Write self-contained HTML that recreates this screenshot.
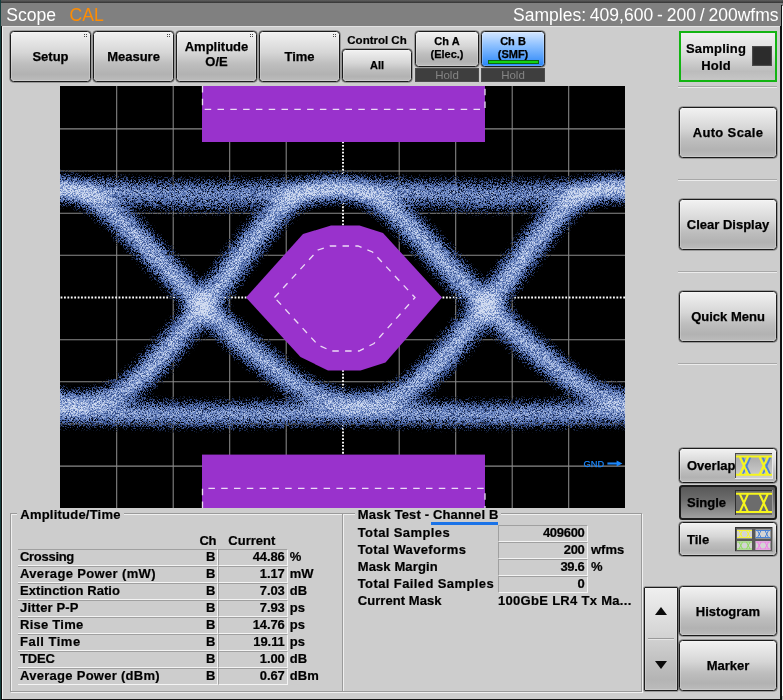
<!DOCTYPE html>
<html lang="en"><head><meta charset="utf-8"><title>Scope</title>
<style>
html,body{margin:0;padding:0}
body{will-change:transform;width:783px;height:700px;overflow:hidden;position:relative;background:#cdcdcd;font-family:"Liberation Sans",sans-serif;color:#000}
.abs{position:absolute}
.btn{position:absolute;box-sizing:border-box;border:1px solid #1c1c1c;border-radius:3.5px;background:linear-gradient(#f2f2f2 0%,#d6d6d6 42%,#bebebe 65%,#b2b2b2 86%,#bcbcbc 100%);font-weight:bold;font-size:13px;display:flex;align-items:center;justify-content:center;text-align:center;line-height:15px;color:#000;-webkit-text-stroke:0.25px #000;box-shadow:inset 0 0 0 1px rgba(255,255,255,.22),0 0 0 0.5px rgba(0,0,0,.5)}
.btn span{display:block}
.dots{position:absolute;right:3px;top:2px;width:3px;height:3px;background:
 linear-gradient(#444,#444) 0 0/1px 1px no-repeat,linear-gradient(#444,#444) 2px 0/1px 1px no-repeat,
 linear-gradient(#444,#444) 0 2px/1px 1px no-repeat,linear-gradient(#444,#444) 2px 2px/1px 1px no-repeat}
.sm{font-size:11px;line-height:13px}
.hold{position:absolute;box-sizing:border-box;background:#3e3e3e;border:1px solid #4c4c4c;color:#848484;font-size:11.5px;text-align:center;line-height:12px;height:14px;width:64px}
.sep{position:absolute;left:678px;width:99px;height:0;border-top:1px solid #a8a8a8;border-bottom:1px solid #ececec}
.gb{position:absolute;box-sizing:border-box;border:1px solid #9a9a9a;box-shadow:1px 1px 0 #f0f0f0, inset 1px 1px 0 #f0f0f0}
.gbt{position:absolute;background:#cdcdcd;-webkit-text-stroke:0.2px #000;font-weight:bold;font-size:13px;line-height:15px;padding:0 3px;white-space:nowrap}
.t{position:absolute;font-weight:bold;font-size:13px;line-height:16px;white-space:nowrap;-webkit-text-stroke:0.2px #000}
.cell{position:absolute;box-sizing:border-box;height:17px;border-top:1px solid #a0a0a0;border-left:1px solid #a0a0a0;border-bottom:1px solid #f4f4f4;border-right:1px solid #f4f4f4}
</style></head><body>

<div class="abs" style="left:0;top:0;width:783px;height:3px;background:linear-gradient(#606060,#343434)"></div>
<div class="abs" style="left:0;top:3px;width:783px;height:23px;background:#808080"></div>
<div class="abs" style="left:0;top:0;width:1px;height:700px;background:#17403f"></div>
<div class="abs" style="left:1px;top:26px;width:1px;height:674px;background:#111"></div>
<div class="abs" style="left:2px;top:26px;width:1px;height:673px;background:#f2f2f2"></div>
<div class="abs" style="left:2px;top:26px;width:778px;height:1px;background:#e2e2e2"></div>
<div class="abs" style="left:1px;top:699px;width:781px;height:1px;background:#111"></div>
<div class="abs" style="left:780px;top:26px;width:2px;height:674px;background:#111"></div>
<div class="abs" style="left:781px;top:5px;width:1px;height:22px;background:#111"></div>
<div class="abs" style="left:782px;top:6px;width:1px;height:690px;background:#fff"></div>
<div class="abs" style="left:6.2px;top:4.8px;font-size:17.6px;line-height:20px;color:#fff;white-space:nowrap">Scope</div>
<div class="abs" style="left:69.5px;top:4.8px;font-size:17.6px;line-height:20px;color:#ff8c00;white-space:nowrap">CAL</div>
<div class="abs" style="right:4.5px;top:4.5px;font-size:17.5px;word-spacing:-1px;line-height:20px;color:#fff;white-space:nowrap">Samples: 409,600 - 200 / 200wfms</div>
<div class="btn " style="left:10px;top:31px;width:81px;height:51px;"><i class="dots"></i><span>Setup</span></div>
<div class="btn " style="left:93px;top:31px;width:81px;height:51px;"><i class="dots"></i><span>Measure</span></div>
<div class="btn " style="left:176px;top:31px;width:81px;height:51px;line-height:14.5px;padding-bottom:4px"><i class="dots"></i><span>Amplitude<br>O/E</span></div>
<div class="btn " style="left:259px;top:31px;width:81px;height:51px;"><i class="dots"></i><span>Time</span></div>
<div class="t" style="left:342px;top:32px;width:70px;text-align:center;font-size:11.5px">Control Ch</div>
<div class="btn sm" style="left:342px;top:49px;width:70px;height:33px;"><span>All</span></div>
<div class="btn sm" style="left:415px;top:31px;width:64px;height:36px;padding-bottom:3px"><span>Ch A<br>(Elec.)</span></div>
<div class="btn sm chb" style="left:481px;top:31px;width:64px;height:36px;background:linear-gradient(#d4e6ff 0%,#8cc0ff 40%,#2a86f8 100%);padding-bottom:3px"><span>Ch B<br>(SMF)</span></div>
<div class="abs" style="left:488px;top:60px;width:51px;height:4px;box-sizing:border-box;background:#14d414;border:1px solid #0c6a0c"></div>
<div class="hold" style="left:415px;top:68px">Hold</div>
<div class="hold" style="left:481px;top:68px">Hold</div>
<div class="abs" style="left:679px;top:31px;width:98px;height:51px;box-sizing:border-box;border:2px solid #12b412;background:linear-gradient(#efefef 0%,#dcdcdc 45%,#bcbcbc 82%,#c6c6c6 100%)"></div>
<div class="t" style="left:681px;top:40.3px;width:70px;text-align:center;line-height:17px;letter-spacing:0.2px">Sampling<br>Hold</div>
<div class="abs" style="left:752px;top:46px;width:20px;height:20px;box-sizing:border-box;background:#2c2c2c;border:1px solid #4a4a4a;box-shadow:inset 0 0 2px #3c3c3c"></div>
<div class="sep" style="top:86px"></div>
<div class="sep" style="top:179px"></div>
<div class="sep" style="top:271px"></div>
<div class="sep" style="top:363px"></div>
<div class="btn " style="left:679px;top:107px;width:98px;height:51px;letter-spacing:0.35px"><span>Auto Scale</span></div>
<div class="btn " style="left:679px;top:199px;width:98px;height:51px;"><span>Clear Display</span></div>
<div class="btn " style="left:679px;top:291px;width:98px;height:51px;"><span>Quick Menu</span></div>
<div class="btn " style="left:679px;top:448px;width:98px;height:35px;justify-content:flex-start;padding-left:7px"><span>Overlap</span></div>
<div class="btn " style="left:679px;top:485px;width:98px;height:35px;justify-content:flex-start;padding-left:6px;background:linear-gradient(#585858,#6c6c6c 40%,#a0a0a0);border:2px solid #1c1c1c;box-shadow:none"><span>Single</span></div>
<div class="btn " style="left:679px;top:522px;width:98px;height:34px;justify-content:flex-start;padding-left:7px"><span>Tile</span></div>
<div class="btn " style="left:679px;top:586px;width:98px;height:50px;"><span>Histogram</span></div>
<div class="btn " style="left:679px;top:640px;width:98px;height:51px;"><span>Marker</span></div>
<div class="btn " style="left:644px;top:587px;width:34px;height:104px;border-radius:1px;background:linear-gradient(#efefef 0%,#d8d8d8 40%,#b4b4b4 90%,#bcbcbc 100%)"><span></span></div>
<div class="abs" style="left:648px;top:638px;width:26px;height:0;border-top:1px solid #9a9a9a;border-bottom:1.5px solid #e6e6e6"></div>
<div class="abs" style="left:654.7px;top:607px;width:0;height:0;border-left:6.3px solid transparent;border-right:6.3px solid transparent;border-bottom:8.2px solid #0a0a0a"></div>
<div class="abs" style="left:654.7px;top:661px;width:0;height:0;border-left:6.3px solid transparent;border-right:6.3px solid transparent;border-top:8.2px solid #0a0a0a"></div>
<svg class="abs" style="left:735px;top:453px" width="38" height="26" viewBox="0 0 38 26">
<defs><linearGradient id="ig1" x1="0" y1="0" x2="0" y2="1"><stop offset="0" stop-color="#a6a6a6"/><stop offset="1" stop-color="#cfcfcf"/></linearGradient></defs>
<rect x="0" y="0" width="38" height="26" fill="#e8e8e8"/><rect x="0" y="0" width="37" height="25" fill="#4a4a4a"/><rect x="1" y="1" width="36" height="24" fill="url(#ig1)"/>
<g fill="none" stroke="#4c84d6" stroke-width="1.8"><path d="M7.5,4 L15.5,22 M7.5,22 L15.5,4 M27.5,4 L35.5,22 M27.5,22 L35.5,4"/></g>
<g fill="none" stroke="#f6f61c" stroke-width="2"><path d="M1,3.6 H37 M1,21.8 H37"/><path stroke-width="2" d="M4.8,4 L13,21.5 M4.8,21.5 L13,4 M24.6,4 L32.8,21.5 M24.6,21.5 L32.8,4"/></g></svg>
<svg class="abs" style="left:735px;top:490px" width="38" height="26" viewBox="0 0 38 26">
<rect x="0" y="0" width="38" height="26" fill="#9a9a9a"/><rect x="0" y="0" width="37" height="25" fill="#2e2e2e"/><rect x="1" y="1" width="36" height="24" fill="#6c6c6c"/>
<g fill="none" stroke="#f6f61c" stroke-width="2"><path d="M1,3.8 H37 M1,22 H37"/><path stroke-width="2" d="M4.8,4 L13,22 M4.8,22 L13,4 M24.6,4 L32.8,22 M24.6,22 L32.8,4"/></g></svg>
<svg class="abs" style="left:735px;top:527px" width="38" height="25" viewBox="0 0 38 25">
<rect x="0" y="0" width="38" height="25" fill="#9a9a9a"/><rect x="0" y="0" width="37" height="24" fill="#333"/><rect x="1" y="1" width="36" height="23" fill="#585858"/>
<rect x="2" y="2.5" width="15" height="9" fill="#d4d4d4"/><g fill="none" stroke="#f2f23a" stroke-width="1"><path d="M2,3.5 h15 M2,10.5 h15"/><path d="M4,3.5 l3.5,7 M4,10.5 l3.5,-7 M11.5,3.5 l3.5,7 M11.5,10.5 l3.5,-7"/></g><rect x="20.5" y="2.5" width="15" height="9" fill="#d4d4d4"/><g fill="none" stroke="#4c84d6" stroke-width="1"><path d="M20.5,3.5 h15 M20.5,10.5 h15"/><path d="M22.5,3.5 l3.5,7 M22.5,10.5 l3.5,-7 M30.0,3.5 l3.5,7 M30.0,10.5 l3.5,-7"/></g><rect x="2" y="14" width="15" height="9" fill="#d4d4d4"/><g fill="none" stroke="#8edc5a" stroke-width="1"><path d="M2,15 h15 M2,22 h15"/><path d="M4,15 l3.5,7 M4,22 l3.5,-7 M11.5,15 l3.5,7 M11.5,22 l3.5,-7"/></g><rect x="20.5" y="14" width="15" height="9" fill="#d4d4d4"/><g fill="none" stroke="#f07ae8" stroke-width="1"><path d="M20.5,15 h15 M20.5,22 h15"/><path d="M22.5,15 l3.5,7 M22.5,22 l3.5,-7 M30.0,15 l3.5,7 M30.0,22 l3.5,-7"/></g></svg>
<svg class="abs" style="left:60px;top:86px" width="565" height="422" viewBox="60 86 565 422">
<defs>
<filter id="eye" filterUnits="userSpaceOnUse" x="60" y="86" width="565" height="422" color-interpolation-filters="sRGB">
<feGaussianBlur in="SourceGraphic" stdDeviation="6.2" result="d"/>
<feTurbulence type="fractalNoise" baseFrequency="1.618 1.4142" numOctaves="1" seed="3" result="t"/>
<feColorMatrix in="t" type="matrix" values="3.3 0 0 0 -1.15  3.3 0 0 0 -1.15  3.3 0 0 0 -1.15  0 0 0 0 1" result="n"/>
<feComponentTransfer in="d" result="sd"><feFuncR type="gamma" exponent="0.4" amplitude="1" offset="0"/><feFuncG type="gamma" exponent="0.4" amplitude="1" offset="0"/><feFuncB type="gamma" exponent="0.4" amplitude="1" offset="0"/></feComponentTransfer>
<feComposite in="sd" in2="n" operator="arithmetic" k1="1" k2="-0.5" k3="0" k4="0.5" result="T"/>
<feComposite in="d" in2="T" operator="arithmetic" k1="0" k2="1.78" k3="1.04" k4="-0.62" result="s"/>
<feColorMatrix in="s" type="matrix" values="1 0 0 0 0  1 0 0 0 0  1 0 0 0 0  0 0 0 0 1" result="s0"/>
<feComponentTransfer in="s0" result="c">
<feFuncR type="table" tableValues="0 0.19 0.33 0.46 0.59 0.715 0.825"/>
<feFuncG type="table" tableValues="0 0.28 0.44 0.56 0.67 0.775 0.865"/>
<feFuncB type="table" tableValues="0 0.50 0.69 0.78 0.845 0.90 0.945"/>
</feComponentTransfer>
<feColorMatrix in="c" type="matrix" values="1 0 0 0 0  0 1 0 0 0  0 0 1 0 0  0 0 5 0 0" result="ca"/>
<feGaussianBlur in="ca" stdDeviation="0.75"/>
</filter>
</defs>
<rect x="60" y="86" width="565" height="422" fill="#000"/>
<g stroke="#8a8a8a" stroke-width="1.05">
<line x1="116.70" y1="86" x2="116.70" y2="508"/>
<line x1="173.20" y1="86" x2="173.20" y2="508"/>
<line x1="229.70" y1="86" x2="229.70" y2="508"/>
<line x1="286.20" y1="86" x2="286.20" y2="508"/>
<line x1="399.20" y1="86" x2="399.20" y2="508"/>
<line x1="455.70" y1="86" x2="455.70" y2="508"/>
<line x1="512.20" y1="86" x2="512.20" y2="508"/>
<line x1="568.70" y1="86" x2="568.70" y2="508"/>
<line x1="60" y1="128.86" x2="625" y2="128.86"/>
<line x1="60" y1="171.02" x2="625" y2="171.02"/>
<line x1="60" y1="213.18" x2="625" y2="213.18"/>
<line x1="60" y1="255.34" x2="625" y2="255.34"/>
<line x1="60" y1="339.66" x2="625" y2="339.66"/>
<line x1="60" y1="381.82" x2="625" y2="381.82"/>
<line x1="60" y1="423.98" x2="625" y2="423.98"/>
<line x1="60" y1="466.14" x2="625" y2="466.14"/>
</g>
<g stroke="#fff" stroke-width="1.9" stroke-dasharray="1.8 1.61">
<line x1="343" y1="87" x2="343" y2="508"/>
<line x1="60.6" y1="297.5" x2="625" y2="297.5"/>
</g>
<g filter="url(#eye)">
<rect x="0" y="0" width="783" height="700" fill="#000"/>
<g fill="none" stroke="#fff" stroke-width="10" stroke-opacity="0.32" stroke-linecap="butt">
<path stroke-width="11" stroke-opacity="0.24" d="M30.0,189.0 L42.0,189.0 L54.0,189.0 L66.0,189.0 L78.0,189.0 L90.0,189.0 L102.0,189.0 L114.0,189.0 L126.0,189.0 L138.0,189.0 L150.0,189.0 L162.0,189.0 L174.0,189.0 L186.0,189.0 L198.0,189.0 L210.0,189.0 L222.0,189.0 L234.0,189.0 L246.0,189.0 L258.0,189.0 L270.0,189.0 L282.0,189.0 L294.0,189.0 L306.0,189.0 L318.0,189.0 L330.0,189.0 L342.0,189.0 L354.0,189.0 L366.0,189.0 L378.0,189.0 L390.0,189.0 L402.0,189.0 L414.0,189.0 L426.0,189.0 L438.0,189.0 L450.0,189.0 L462.0,189.0 L474.0,189.0 L486.0,189.0 L498.0,189.0 L510.0,189.0 L522.0,189.0 L534.0,189.0 L546.0,189.0 L558.0,189.0 L570.0,189.0 L582.0,189.0 L594.0,189.0 L606.0,189.0 L618.0,189.0 L630.0,189.0 L642.0,189.0 L654.0,189.0"/>
<path stroke-width="17" stroke-opacity="0.25" d="M30.0,191.8 L36.0,191.4 L42.0,191.0 L48.0,190.8 L54.0,190.6 L60.0,190.5 L66.0,190.5 L72.0,190.6 L78.0,190.7 L84.0,190.9 L90.0,191.2 L96.0,191.6 L102.0,192.0 L108.0,192.4 L114.0,193.0 L120.0,193.5 L126.0,194.1 L132.0,194.7 L138.0,195.3 L144.0,195.9 L150.0,196.4 L156.0,197.0 L162.0,197.5 L168.0,198.0 L174.0,198.4 L180.0,198.8 L186.0,199.1 L192.0,199.3 L198.0,199.4 L204.0,199.5 L210.0,199.5 L216.0,199.4 L222.0,199.2 L228.0,199.0 L234.0,198.7 L240.0,198.3 L246.0,197.8 L252.0,197.4 L258.0,196.8 L264.0,196.3 L270.0,195.7 L276.0,195.1 L282.0,194.5 L288.0,193.9 L294.0,193.3 L300.0,192.8 L306.0,192.3 L312.0,191.8 L318.0,191.4 L324.0,191.1 L330.0,190.8 L336.0,190.6 L342.0,190.5 L348.0,190.5 L354.0,190.5 L360.0,190.7 L366.0,190.9 L372.0,191.1 L378.0,191.5 L384.0,191.9 L390.0,192.4 L396.0,192.9 L402.0,193.4 L408.0,194.0 L414.0,194.6 L420.0,195.2 L426.0,195.8 L432.0,196.4 L438.0,196.9 L444.0,197.4 L450.0,197.9 L456.0,198.3 L462.0,198.7 L468.0,199.0 L474.0,199.3 L480.0,199.4 L486.0,199.5 L492.0,199.5 L498.0,199.4 L504.0,199.3 L510.0,199.0 L516.0,198.7 L522.0,198.3 L528.0,197.9 L534.0,197.4 L540.0,196.9 L546.0,196.4 L552.0,195.8 L558.0,195.2 L564.0,194.6 L570.0,194.0 L576.0,193.4 L582.0,192.9 L588.0,192.4 L594.0,191.9 L600.0,191.5 L606.0,191.1 L612.0,190.9 L618.0,190.7 L624.0,190.5 L630.0,190.5 L636.0,190.5 L642.0,190.6 L648.0,190.8 L654.0,191.1"/>
<path stroke-width="16" stroke-opacity="0.4" d="M30.0,412.8 L36.0,412.7 L42.0,412.6 L48.0,412.6 L54.0,412.5 L60.0,412.5 L66.0,412.5 L72.0,412.5 L78.0,412.5 L84.0,412.6 L90.0,412.7 L96.0,412.7 L102.0,412.8 L108.0,412.9 L114.0,413.0 L120.0,413.2 L126.0,413.3 L132.0,413.4 L138.0,413.6 L144.0,413.7 L150.0,413.8 L156.0,413.9 L162.0,414.1 L168.0,414.2 L174.0,414.3 L180.0,414.3 L186.0,414.4 L192.0,414.5 L198.0,414.5 L204.0,414.5 L210.0,414.5 L216.0,414.5 L222.0,414.4 L228.0,414.4 L234.0,414.3 L240.0,414.2 L246.0,414.1 L252.0,414.0 L258.0,413.9 L264.0,413.8 L270.0,413.6 L276.0,413.5 L282.0,413.4 L288.0,413.3 L294.0,413.1 L300.0,413.0 L306.0,412.9 L312.0,412.8 L318.0,412.7 L324.0,412.6 L330.0,412.6 L336.0,412.5 L342.0,412.5 L348.0,412.5 L354.0,412.5 L360.0,412.5 L366.0,412.6 L372.0,412.6 L378.0,412.7 L384.0,412.8 L390.0,412.9 L396.0,413.0 L402.0,413.1 L408.0,413.3 L414.0,413.4 L420.0,413.5 L426.0,413.7 L432.0,413.8 L438.0,413.9 L444.0,414.0 L450.0,414.1 L456.0,414.2 L462.0,414.3 L468.0,414.4 L474.0,414.4 L480.0,414.5 L486.0,414.5 L492.0,414.5 L498.0,414.5 L504.0,414.4 L510.0,414.4 L516.0,414.3 L522.0,414.2 L528.0,414.1 L534.0,414.0 L540.0,413.9 L546.0,413.8 L552.0,413.7 L558.0,413.5 L564.0,413.4 L570.0,413.3 L576.0,413.1 L582.0,413.0 L588.0,412.9 L594.0,412.8 L600.0,412.7 L606.0,412.6 L612.0,412.6 L618.0,412.5 L624.0,412.5 L630.0,412.5 L636.0,412.5 L642.0,412.5 L648.0,412.6 L654.0,412.6"/>
<g stroke="none" fill="#fff"><path fill-opacity="0.32" d="M29.0,182.4 L35.0,181.2 L41.0,180.3 L47.0,179.6 L53.0,179.2 L59.0,178.9 L65.0,178.7 L65.0,193.5 L59.0,193.7 L53.0,194.1 L47.0,194.7 L41.0,195.7 L35.0,197.2 L29.0,199.3Z"/>
<path fill-opacity="0.3" d="M29.0,187.3 L35.0,185.8 L41.0,184.8 L47.0,184.0 L53.0,183.5 L59.0,183.2 L65.0,183.0 L65.0,189.2 L59.0,189.4 L53.0,189.7 L47.0,190.3 L41.0,191.2 L35.0,192.5 L29.0,194.4Z"/>
<path fill-opacity="0.32" d="M29.0,383.0 L35.0,385.9 L41.0,388.3 L47.0,390.2 L53.0,391.7 L59.0,392.9 L65.0,393.8 L65.0,408.9 L59.0,408.2 L53.0,407.3 L47.0,406.2 L41.0,404.9 L35.0,403.4 L29.0,401.5Z"/>
<path fill-opacity="0.3" d="M29.0,388.4 L35.0,391.0 L41.0,393.1 L47.0,394.9 L53.0,396.2 L59.0,397.3 L65.0,398.1 L65.0,404.5 L59.0,403.7 L53.0,402.8 L47.0,401.6 L41.0,400.1 L35.0,398.3 L29.0,396.1Z"/>
<path fill-opacity="0.32" d="M63.5,395.4 L69.5,395.2 L75.5,395.1 L81.5,394.8 L87.5,394.3 L93.5,393.5 L99.5,392.2 L105.5,390.3 L111.5,387.5 L117.5,383.9 L123.5,379.5 L129.5,374.4 L135.5,368.7 L141.5,362.5 L147.5,356.0 L153.5,349.2 L159.5,342.1 L165.5,335.0 L171.5,327.7 L177.5,320.4 L183.5,312.9 L189.5,305.4 L195.5,297.7 L201.5,290.0 L207.5,282.1 L213.5,274.2 L219.5,266.3 L225.5,258.3 L231.5,250.3 L237.5,242.4 L243.5,234.6 L249.5,227.1 L255.5,219.9 L261.5,213.2 L267.5,207.0 L273.5,201.5 L279.5,196.7 L285.5,192.7 L291.5,189.4 L297.5,186.8 L303.5,184.6 L309.5,183.0 L315.5,181.7 L321.5,180.6 L327.5,179.9 L333.5,179.3 L339.5,179.0 L345.5,178.8 L345.5,193.6 L339.5,193.8 L333.5,194.3 L327.5,195.1 L321.5,196.2 L315.5,198.0 L309.5,200.3 L303.5,203.5 L297.5,207.6 L291.5,212.6 L285.5,218.3 L279.5,224.8 L273.5,231.9 L267.5,239.4 L261.5,247.2 L255.5,255.2 L249.5,263.2 L243.5,271.3 L237.5,279.3 L231.5,287.3 L225.5,295.1 L219.5,302.9 L213.5,310.6 L207.5,318.1 L201.5,325.6 L195.5,333.0 L189.5,340.2 L183.5,347.3 L177.5,354.3 L171.5,361.1 L165.5,367.7 L159.5,374.0 L153.5,379.9 L147.5,385.4 L141.5,390.3 L135.5,394.6 L129.5,398.3 L123.5,401.3 L117.5,403.6 L111.5,405.5 L105.5,406.9 L99.5,408.0 L93.5,408.8 L87.5,409.3 L81.5,409.7 L75.5,409.9 L69.5,410.1 L63.5,410.2Z"/>
<path fill-opacity="0.3" d="M63.5,399.7 L69.5,399.5 L75.5,399.4 L81.5,399.1 L87.5,398.7 L93.5,398.0 L99.5,396.8 L105.5,395.1 L111.5,392.7 L117.5,389.6 L123.5,385.8 L129.5,381.3 L135.5,376.2 L141.5,370.6 L147.5,364.5 L153.5,358.1 L159.5,351.4 L165.5,344.5 L171.5,337.4 L177.5,330.2 L183.5,322.9 L189.5,315.5 L195.5,307.9 L201.5,300.3 L207.5,292.6 L213.5,284.8 L219.5,276.9 L225.5,269.0 L231.5,261.0 L237.5,253.1 L243.5,245.3 L249.5,237.6 L255.5,230.1 L261.5,223.0 L267.5,216.4 L273.5,210.3 L279.5,204.9 L285.5,200.1 L291.5,196.1 L297.5,192.8 L303.5,190.1 L309.5,188.0 L315.5,186.4 L321.5,185.2 L327.5,184.3 L333.5,183.7 L339.5,183.3 L345.5,183.1 L345.5,189.3 L339.5,189.5 L333.5,190.0 L327.5,190.7 L321.5,191.7 L315.5,193.2 L309.5,195.3 L303.5,198.1 L297.5,201.6 L291.5,205.8 L285.5,210.9 L279.5,216.7 L273.5,223.1 L267.5,230.0 L261.5,237.3 L255.5,245.0 L249.5,252.8 L243.5,260.7 L237.5,268.6 L231.5,276.6 L225.5,284.5 L219.5,292.3 L213.5,300.0 L207.5,307.7 L201.5,315.3 L195.5,322.7 L189.5,330.1 L183.5,337.3 L177.5,344.5 L171.5,351.4 L165.5,358.2 L159.5,364.7 L153.5,371.0 L147.5,376.8 L141.5,382.2 L135.5,387.1 L129.5,391.3 L123.5,395.0 L117.5,397.9 L111.5,400.3 L105.5,402.1 L99.5,403.4 L93.5,404.3 L87.5,405.0 L81.5,405.4 L75.5,405.6 L69.5,405.8 L63.5,405.9Z"/>
<path fill-opacity="0.32" d="M63.5,180.9 L69.5,181.8 L75.5,183.0 L81.5,184.6 L87.5,186.6 L93.5,189.1 L99.5,192.0 L105.5,195.5 L111.5,199.6 L117.5,204.1 L123.5,209.2 L129.5,214.6 L135.5,220.3 L141.5,226.3 L147.5,232.5 L153.5,238.8 L159.5,245.1 L165.5,251.5 L171.5,257.9 L177.5,264.3 L183.5,270.7 L189.5,277.0 L195.5,283.2 L201.5,289.3 L207.5,295.4 L213.5,301.4 L219.5,307.2 L225.5,313.0 L231.5,318.7 L237.5,324.3 L243.5,329.8 L249.5,335.2 L255.5,340.5 L261.5,345.7 L267.5,350.8 L273.5,355.8 L279.5,360.7 L285.5,365.5 L291.5,370.0 L297.5,374.3 L303.5,378.2 L309.5,381.7 L315.5,384.8 L321.5,387.4 L327.5,389.5 L333.5,391.1 L339.5,392.4 L345.5,393.4 L345.5,408.6 L339.5,407.8 L333.5,406.9 L327.5,405.7 L321.5,404.3 L315.5,402.6 L309.5,400.6 L303.5,398.2 L297.5,395.4 L291.5,392.2 L285.5,388.7 L279.5,384.8 L273.5,380.6 L267.5,376.1 L261.5,371.5 L255.5,366.7 L249.5,361.7 L243.5,356.7 L237.5,351.5 L231.5,346.3 L225.5,341.0 L219.5,335.5 L213.5,330.0 L207.5,324.4 L201.5,318.7 L195.5,312.8 L189.5,306.9 L183.5,300.9 L177.5,294.8 L171.5,288.7 L165.5,282.4 L159.5,276.1 L153.5,269.7 L147.5,263.3 L141.5,256.8 L135.5,250.4 L129.5,244.0 L123.5,237.7 L117.5,231.6 L111.5,225.7 L105.5,220.1 L99.5,214.9 L93.5,210.2 L87.5,206.2 L81.5,202.7 L75.5,199.9 L69.5,197.8 L63.5,196.3Z"/>
<path fill-opacity="0.3" d="M63.5,185.4 L69.5,186.5 L75.5,187.9 L81.5,189.9 L87.5,192.3 L93.5,195.2 L99.5,198.7 L105.5,202.7 L111.5,207.2 L117.5,212.1 L123.5,217.4 L129.5,223.1 L135.5,229.0 L141.5,235.2 L147.5,241.4 L153.5,247.7 L159.5,254.1 L165.5,260.5 L171.5,266.8 L177.5,273.2 L183.5,279.4 L189.5,285.7 L195.5,291.8 L201.5,297.8 L207.5,303.8 L213.5,309.7 L219.5,315.4 L225.5,321.1 L231.5,326.7 L237.5,332.2 L243.5,337.6 L249.5,342.9 L255.5,348.1 L261.5,353.2 L267.5,358.2 L273.5,363.0 L279.5,367.7 L285.5,372.2 L291.5,376.5 L297.5,380.4 L303.5,384.0 L309.5,387.2 L315.5,390.0 L321.5,392.3 L327.5,394.2 L333.5,395.7 L339.5,396.9 L345.5,397.8 L345.5,404.2 L339.5,403.4 L333.5,402.3 L327.5,401.0 L321.5,399.4 L315.5,397.5 L309.5,395.1 L303.5,392.4 L297.5,389.3 L291.5,385.8 L285.5,382.0 L279.5,377.8 L273.5,373.4 L267.5,368.8 L261.5,364.0 L255.5,359.1 L249.5,354.0 L243.5,348.9 L237.5,343.6 L231.5,338.3 L225.5,332.9 L219.5,327.3 L213.5,321.7 L207.5,316.0 L201.5,310.2 L195.5,304.2 L189.5,298.2 L183.5,292.2 L177.5,286.0 L171.5,279.7 L165.5,273.4 L159.5,267.1 L153.5,260.7 L147.5,254.3 L141.5,248.0 L135.5,241.7 L129.5,235.5 L123.5,229.4 L117.5,223.6 L111.5,218.1 L105.5,213.0 L99.5,208.3 L93.5,204.1 L87.5,200.5 L81.5,197.5 L75.5,195.0 L69.5,193.2 L63.5,191.9Z"/>
<path fill-opacity="0.32" d="M346.5,395.4 L352.5,395.2 L358.5,395.1 L364.5,394.8 L370.5,394.3 L376.5,393.5 L382.5,392.2 L388.5,390.3 L394.5,387.5 L400.5,383.9 L406.5,379.5 L412.5,374.4 L418.5,368.7 L424.5,362.5 L430.5,356.0 L436.5,349.2 L442.5,342.1 L448.5,335.0 L454.5,327.7 L460.5,320.4 L466.5,312.9 L472.5,305.4 L478.5,297.7 L484.5,290.0 L490.5,282.1 L496.5,274.2 L502.5,266.3 L508.5,258.3 L514.5,250.3 L520.5,242.4 L526.5,234.6 L532.5,227.1 L538.5,219.9 L544.5,213.2 L550.5,207.0 L556.5,201.5 L562.5,196.7 L568.5,192.7 L574.5,189.4 L580.5,186.8 L586.5,184.6 L592.5,183.0 L598.5,181.7 L604.5,180.6 L610.5,179.9 L616.5,179.3 L622.5,179.0 L628.5,178.8 L628.5,193.6 L622.5,193.8 L616.5,194.3 L610.5,195.1 L604.5,196.2 L598.5,198.0 L592.5,200.3 L586.5,203.5 L580.5,207.6 L574.5,212.6 L568.5,218.3 L562.5,224.8 L556.5,231.9 L550.5,239.4 L544.5,247.2 L538.5,255.2 L532.5,263.2 L526.5,271.3 L520.5,279.3 L514.5,287.3 L508.5,295.1 L502.5,302.9 L496.5,310.6 L490.5,318.1 L484.5,325.6 L478.5,333.0 L472.5,340.2 L466.5,347.3 L460.5,354.3 L454.5,361.1 L448.5,367.7 L442.5,374.0 L436.5,379.9 L430.5,385.4 L424.5,390.3 L418.5,394.6 L412.5,398.3 L406.5,401.3 L400.5,403.6 L394.5,405.5 L388.5,406.9 L382.5,408.0 L376.5,408.8 L370.5,409.3 L364.5,409.7 L358.5,409.9 L352.5,410.1 L346.5,410.2Z"/>
<path fill-opacity="0.3" d="M346.5,399.7 L352.5,399.5 L358.5,399.4 L364.5,399.1 L370.5,398.7 L376.5,398.0 L382.5,396.8 L388.5,395.1 L394.5,392.7 L400.5,389.6 L406.5,385.8 L412.5,381.3 L418.5,376.2 L424.5,370.6 L430.5,364.5 L436.5,358.1 L442.5,351.4 L448.5,344.5 L454.5,337.4 L460.5,330.2 L466.5,322.9 L472.5,315.5 L478.5,307.9 L484.5,300.3 L490.5,292.6 L496.5,284.8 L502.5,276.9 L508.5,269.0 L514.5,261.0 L520.5,253.1 L526.5,245.3 L532.5,237.6 L538.5,230.1 L544.5,223.0 L550.5,216.4 L556.5,210.3 L562.5,204.9 L568.5,200.1 L574.5,196.1 L580.5,192.8 L586.5,190.1 L592.5,188.0 L598.5,186.4 L604.5,185.2 L610.5,184.3 L616.5,183.7 L622.5,183.3 L628.5,183.1 L628.5,189.3 L622.5,189.5 L616.5,190.0 L610.5,190.7 L604.5,191.7 L598.5,193.2 L592.5,195.3 L586.5,198.1 L580.5,201.6 L574.5,205.8 L568.5,210.9 L562.5,216.7 L556.5,223.1 L550.5,230.0 L544.5,237.3 L538.5,245.0 L532.5,252.8 L526.5,260.7 L520.5,268.6 L514.5,276.6 L508.5,284.5 L502.5,292.3 L496.5,300.0 L490.5,307.7 L484.5,315.3 L478.5,322.7 L472.5,330.1 L466.5,337.3 L460.5,344.5 L454.5,351.4 L448.5,358.2 L442.5,364.7 L436.5,371.0 L430.5,376.8 L424.5,382.2 L418.5,387.1 L412.5,391.3 L406.5,395.0 L400.5,397.9 L394.5,400.3 L388.5,402.1 L382.5,403.4 L376.5,404.3 L370.5,405.0 L364.5,405.4 L358.5,405.6 L352.5,405.8 L346.5,405.9Z"/>
<path fill-opacity="0.32" d="M346.5,180.9 L352.5,181.8 L358.5,183.0 L364.5,184.6 L370.5,186.6 L376.5,189.1 L382.5,192.0 L388.5,195.5 L394.5,199.6 L400.5,204.1 L406.5,209.2 L412.5,214.6 L418.5,220.3 L424.5,226.3 L430.5,232.5 L436.5,238.8 L442.5,245.1 L448.5,251.5 L454.5,257.9 L460.5,264.3 L466.5,270.7 L472.5,277.0 L478.5,283.2 L484.5,289.3 L490.5,295.4 L496.5,301.4 L502.5,307.2 L508.5,313.0 L514.5,318.7 L520.5,324.3 L526.5,329.8 L532.5,335.2 L538.5,340.5 L544.5,345.7 L550.5,350.8 L556.5,355.8 L562.5,360.7 L568.5,365.5 L574.5,370.0 L580.5,374.3 L586.5,378.2 L592.5,381.7 L598.5,384.8 L604.5,387.4 L610.5,389.5 L616.5,391.1 L622.5,392.4 L628.5,393.4 L628.5,408.6 L622.5,407.8 L616.5,406.9 L610.5,405.7 L604.5,404.3 L598.5,402.6 L592.5,400.6 L586.5,398.2 L580.5,395.4 L574.5,392.2 L568.5,388.7 L562.5,384.8 L556.5,380.6 L550.5,376.1 L544.5,371.5 L538.5,366.7 L532.5,361.7 L526.5,356.7 L520.5,351.5 L514.5,346.3 L508.5,341.0 L502.5,335.5 L496.5,330.0 L490.5,324.4 L484.5,318.7 L478.5,312.8 L472.5,306.9 L466.5,300.9 L460.5,294.8 L454.5,288.7 L448.5,282.4 L442.5,276.1 L436.5,269.7 L430.5,263.3 L424.5,256.8 L418.5,250.4 L412.5,244.0 L406.5,237.7 L400.5,231.6 L394.5,225.7 L388.5,220.1 L382.5,214.9 L376.5,210.2 L370.5,206.2 L364.5,202.7 L358.5,199.9 L352.5,197.8 L346.5,196.3Z"/>
<path fill-opacity="0.3" d="M346.5,185.4 L352.5,186.5 L358.5,187.9 L364.5,189.9 L370.5,192.3 L376.5,195.2 L382.5,198.7 L388.5,202.7 L394.5,207.2 L400.5,212.1 L406.5,217.4 L412.5,223.1 L418.5,229.0 L424.5,235.2 L430.5,241.4 L436.5,247.7 L442.5,254.1 L448.5,260.5 L454.5,266.8 L460.5,273.2 L466.5,279.4 L472.5,285.7 L478.5,291.8 L484.5,297.8 L490.5,303.8 L496.5,309.7 L502.5,315.4 L508.5,321.1 L514.5,326.7 L520.5,332.2 L526.5,337.6 L532.5,342.9 L538.5,348.1 L544.5,353.2 L550.5,358.2 L556.5,363.0 L562.5,367.7 L568.5,372.2 L574.5,376.5 L580.5,380.4 L586.5,384.0 L592.5,387.2 L598.5,390.0 L604.5,392.3 L610.5,394.2 L616.5,395.7 L622.5,396.9 L628.5,397.8 L628.5,404.2 L622.5,403.4 L616.5,402.3 L610.5,401.0 L604.5,399.4 L598.5,397.5 L592.5,395.1 L586.5,392.4 L580.5,389.3 L574.5,385.8 L568.5,382.0 L562.5,377.8 L556.5,373.4 L550.5,368.8 L544.5,364.0 L538.5,359.1 L532.5,354.0 L526.5,348.9 L520.5,343.6 L514.5,338.3 L508.5,332.9 L502.5,327.3 L496.5,321.7 L490.5,316.0 L484.5,310.2 L478.5,304.2 L472.5,298.2 L466.5,292.2 L460.5,286.0 L454.5,279.7 L448.5,273.4 L442.5,267.1 L436.5,260.7 L430.5,254.3 L424.5,248.0 L418.5,241.7 L412.5,235.5 L406.5,229.4 L400.5,223.6 L394.5,218.1 L388.5,213.0 L382.5,208.3 L376.5,204.1 L370.5,200.5 L364.5,197.5 L358.5,195.0 L352.5,193.2 L346.5,191.9Z"/>
<path fill-opacity="0.32" d="M629.5,395.4 L635.5,395.2 L641.5,395.1 L647.5,394.8 L653.5,394.3 L653.5,409.3 L647.5,409.7 L641.5,409.9 L635.5,410.1 L629.5,410.2Z"/>
<path fill-opacity="0.3" d="M629.5,399.7 L635.5,399.5 L641.5,399.4 L647.5,399.1 L653.5,398.7 L653.5,405.0 L647.5,405.4 L641.5,405.6 L635.5,405.8 L629.5,405.9Z"/>
<path fill-opacity="0.32" d="M629.5,180.9 L635.5,181.8 L641.5,183.0 L647.5,184.6 L653.5,186.6 L653.5,206.2 L647.5,202.7 L641.5,199.9 L635.5,197.8 L629.5,196.3Z"/>
<path fill-opacity="0.3" d="M629.5,185.4 L635.5,186.5 L641.5,187.9 L647.5,189.9 L653.5,192.3 L653.5,200.5 L647.5,197.5 L641.5,195.0 L635.5,193.2 L629.5,191.9Z"/></g>
</g>
</g>
<g fill="#9932cc">
<rect x="202" y="86" width="283" height="56"/>
<rect x="202" y="454.6" width="283" height="53.4"/>
<polygon points="246,297.5 303,234 331,225.5 359.5,225.5 383,233 442,297.5 385.5,362.5 360.5,370.5 328,370.5 300.5,357"/>
</g>
<g fill="none" stroke="#ecdcf5" stroke-width="1.3" stroke-dasharray="6.5 6.3">
<polyline points="202.5,86 202.5,109.4 485,109.4 485,86"/>
<polyline points="202.5,508 202.5,488.3 485,488.3 485,508"/>
<polygon points="274.5,297.5 318,250 330,246 358,246 372.5,252 415,297.5 374,343.5 359,351 331.5,351 318,345"/>
</g>
<text x="583.6" y="466.6" stroke="#1a86fa" stroke-width="0.25" font-family="Liberation Sans, sans-serif" font-size="9.8" fill="#1a86fa" textLength="20.6" lengthAdjust="spacingAndGlyphs">GND</text>
<path d="M607.4,463.5 H618" stroke="#1a86fa" stroke-width="2.1" fill="none"/><path d="M616.6,460.4 L622.4,463.5 L616.6,466.6 Z" fill="#1a86fa"/>
</svg>
<div class="gb" style="left:10px;top:513px;width:333px;height:179px"></div>
<div class="gbt" style="left:17.3px;top:509.2px;height:11px;line-height:11px;letter-spacing:0.22px">Amplitude/Time</div>
<div class="t" style="left:199.5px;top:532.5px;letter-spacing:-0.3px">Ch</div>
<div class="t" style="left:228.3px;top:532.5px">Current</div>
<div class="cell" style="left:18px;top:549px;width:200px;border-left:none"></div>
<div class="cell" style="left:218px;top:549px;width:70px"></div>
<div class="t" style="left:20px;top:549px;letter-spacing:-0.29px">Crossing</div>
<div class="t" style="left:201.3px;top:549px;width:19px;text-align:center">B</div>
<div class="t" style="left:220px;top:549px;width:64.7px;text-align:right;letter-spacing:-0.1px">44.86</div>
<div class="t" style="left:289.8px;top:549px">%</div>
<div class="cell" style="left:18px;top:566px;width:200px;border-left:none"></div>
<div class="cell" style="left:218px;top:566px;width:70px"></div>
<div class="t" style="left:20px;top:566px;letter-spacing:0.35px">Average Power (mW)</div>
<div class="t" style="left:201.3px;top:566px;width:19px;text-align:center">B</div>
<div class="t" style="left:220px;top:566px;width:64.7px;text-align:right;letter-spacing:-0.1px">1.17</div>
<div class="t" style="left:289.8px;top:566px">mW</div>
<div class="cell" style="left:18px;top:583px;width:200px;border-left:none"></div>
<div class="cell" style="left:218px;top:583px;width:70px"></div>
<div class="t" style="left:20px;top:583px;letter-spacing:0.07px">Extinction Ratio</div>
<div class="t" style="left:201.3px;top:583px;width:19px;text-align:center">B</div>
<div class="t" style="left:220px;top:583px;width:64.7px;text-align:right;letter-spacing:-0.1px">7.03</div>
<div class="t" style="left:289.8px;top:583px">dB</div>
<div class="cell" style="left:18px;top:600px;width:200px;border-left:none"></div>
<div class="cell" style="left:218px;top:600px;width:70px"></div>
<div class="t" style="left:20px;top:600px;letter-spacing:0.16px">Jitter P-P</div>
<div class="t" style="left:201.3px;top:600px;width:19px;text-align:center">B</div>
<div class="t" style="left:220px;top:600px;width:64.7px;text-align:right;letter-spacing:-0.1px">7.93</div>
<div class="t" style="left:289.8px;top:600px">ps</div>
<div class="cell" style="left:18px;top:617px;width:200px;border-left:none"></div>
<div class="cell" style="left:218px;top:617px;width:70px"></div>
<div class="t" style="left:20px;top:617px;letter-spacing:0.25px">Rise Time</div>
<div class="t" style="left:201.3px;top:617px;width:19px;text-align:center">B</div>
<div class="t" style="left:220px;top:617px;width:64.7px;text-align:right;letter-spacing:-0.1px">14.76</div>
<div class="t" style="left:289.8px;top:617px">ps</div>
<div class="cell" style="left:18px;top:634px;width:200px;border-left:none"></div>
<div class="cell" style="left:218px;top:634px;width:70px"></div>
<div class="t" style="left:20px;top:634px;letter-spacing:0.5px">Fall Time</div>
<div class="t" style="left:201.3px;top:634px;width:19px;text-align:center">B</div>
<div class="t" style="left:220px;top:634px;width:64.7px;text-align:right;letter-spacing:-0.1px">19.11</div>
<div class="t" style="left:289.8px;top:634px">ps</div>
<div class="cell" style="left:18px;top:651px;width:200px;border-left:none"></div>
<div class="cell" style="left:218px;top:651px;width:70px"></div>
<div class="t" style="left:20px;top:651px;letter-spacing:-0.17px">TDEC</div>
<div class="t" style="left:201.3px;top:651px;width:19px;text-align:center">B</div>
<div class="t" style="left:220px;top:651px;width:64.7px;text-align:right;letter-spacing:-0.1px">1.00</div>
<div class="t" style="left:289.8px;top:651px">dB</div>
<div class="cell" style="left:18px;top:668px;width:200px;border-left:none"></div>
<div class="cell" style="left:218px;top:668px;width:70px"></div>
<div class="t" style="left:20px;top:668px;letter-spacing:0.28px">Average Power (dBm)</div>
<div class="t" style="left:201.3px;top:668px;width:19px;text-align:center">B</div>
<div class="t" style="left:220px;top:668px;width:64.7px;text-align:right;letter-spacing:-0.1px">0.67</div>
<div class="t" style="left:289.8px;top:668px">dBm</div>
<div class="gb" style="left:342px;top:513px;width:300px;height:179px"></div>
<div class="gbt" style="left:354.8px;top:509.2px;height:11px;line-height:11px;letter-spacing:0.14px">Mask Test - Channel B</div>
<div class="abs" style="left:431px;top:522px;width:67px;height:2.5px;background:#1a73e8"></div>
<div class="cell" style="left:498px;top:525px;width:90px"></div>
<div class="t" style="left:357.7px;top:525px;letter-spacing:0.4px">Total Samples</div>
<div class="t" style="left:500px;top:525px;width:84.5px;text-align:right;letter-spacing:-0.3px">409600</div>
<div class="t" style="left:591px;top:525px"></div>
<div class="cell" style="left:498px;top:542px;width:90px"></div>
<div class="t" style="left:357.7px;top:542px;letter-spacing:0.35px">Total Waveforms</div>
<div class="t" style="left:500px;top:542px;width:84.5px;text-align:right;letter-spacing:-0.3px">200</div>
<div class="t" style="left:591px;top:542px">wfms</div>
<div class="cell" style="left:498px;top:559px;width:90px"></div>
<div class="t" style="left:357.7px;top:559px;letter-spacing:0.12px">Mask Margin</div>
<div class="t" style="left:500px;top:559px;width:84.5px;text-align:right;letter-spacing:-0.3px">39.6</div>
<div class="t" style="left:591px;top:559px">%</div>
<div class="cell" style="left:498px;top:576px;width:90px"></div>
<div class="t" style="left:357.7px;top:576px;letter-spacing:0.4px">Total Failed Samples</div>
<div class="t" style="left:500px;top:576px;width:84.5px;text-align:right;letter-spacing:-0.3px">0</div>
<div class="t" style="left:591px;top:576px"></div>
<div class="t" style="left:357.7px;top:593px;letter-spacing:0.07px">Current Mask</div>
<div class="t" style="left:498px;top:593px;letter-spacing:0.3px">100GbE LR4 Tx Ma...</div>
</body></html>
